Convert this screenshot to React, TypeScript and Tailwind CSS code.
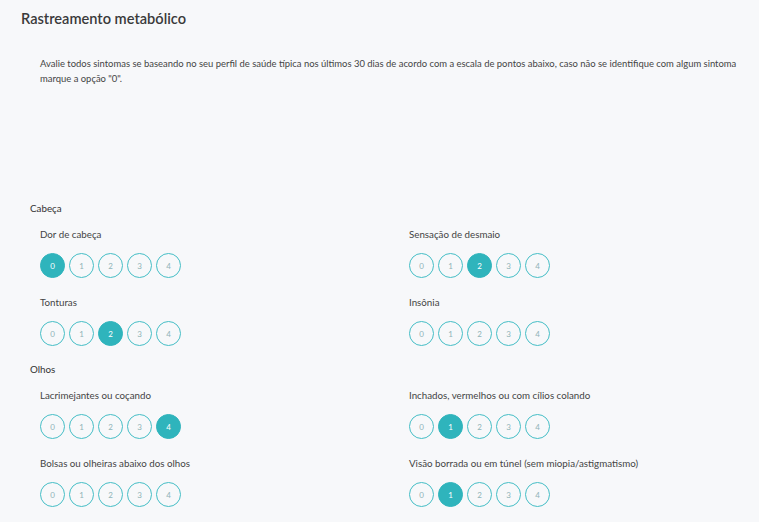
import React from 'react';

type Item = { label: string; value: number };
type Section = { title: string; items: Item[] };

const sections: Section[] = [
  {
    title: 'Cabeça',
    items: [
      { label: 'Dor de cabeça', value: 0 },
      { label: 'Sensação de desmaio', value: 2 },
      { label: 'Tonturas', value: 2 },
      { label: 'Insônia', value: -1 },
    ],
  },
  {
    title: 'Olhos',
    items: [
      { label: 'Lacrimejantes ou coçando', value: 4 },
      { label: 'Inchados, vermelhos ou com cílios colando', value: 1 },
      { label: 'Bolsas ou olheiras abaixo dos olhos', value: -1 },
      { label: 'Visão borrada ou em túnel (sem miopia/astigmatismo)', value: 1 },
    ],
  },
];

const Scale: React.FC<{ value: number }> = ({ value }) => (
  <div className="flex gap-[4px] mt-[11px]">
    {[0, 1, 2, 3, 4].map((n) =>
      n === value ? (
        <div
          key={n}
          className="w-[25px] h-[25px] rounded-full bg-[#2fb4bc] border-[1.5px] border-[#2fb4bc] flex items-center justify-center text-[8px] text-white"
        >
          {n}
        </div>
      ) : (
        <div
          key={n}
          className="w-[25px] h-[25px] rounded-full border-[1.5px] border-[#45bec6] flex items-center justify-center text-[8px] text-[#8fb3b8]"
        >
          {n}
        </div>
      )
    )}
  </div>
);

export default function App() {
  return (
    <div
      className="w-[759px] h-[522px] overflow-hidden bg-[#f7f8fa] text-[#3a3a3a]"
      style={{ fontFamily: 'Lato, "Open Sans", sans-serif' }}
    >
      <div className="pl-[21px] pt-[9px]">
        <h1 className="text-[14.6px] leading-[20px] font-semibold text-[#3a3a3a]">Rastreamento metabólico</h1>
      </div>
      <p className="pl-[40px] pt-[27px] text-[9.45px] leading-[15px] text-[#444] whitespace-nowrap">
        Avalie todos sintomas se baseando no seu perfil de saúde típica nos últimos 30 dias de acordo com a escala de pontos abaixo, caso não se identifique com algum sintoma
        <br />
        marque a opção "0".
      </p>
      <div className="h-[115px]" />
      <div className="flex flex-col gap-[16px] pl-[30px]">
        {sections.map((s) => (
          <div key={s.title}>
            <div className="text-[9.8px] leading-[15px] mb-[11px] text-[#333]">{s.title}</div>
            <div className="grid grid-cols-[369px_1fr] gap-y-[17px] pl-[10px]">
              {s.items.map((it) => (
                <div key={it.label}>
                  <div className="text-[9.75px] leading-[15px] text-[#444]">{it.label}</div>
                  <Scale value={it.value} />
                </div>
              ))}
            </div>
          </div>
        ))}
      </div>
    </div>
  );
}
